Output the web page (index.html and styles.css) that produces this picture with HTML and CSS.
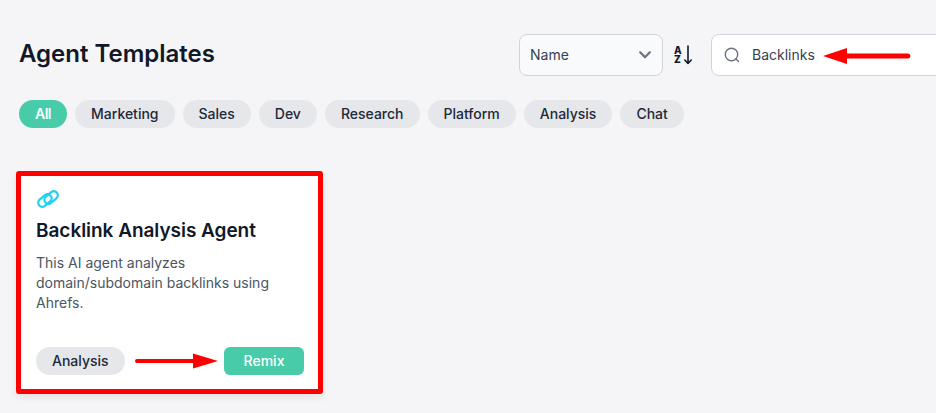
FILE: index.html
```html
<!DOCTYPE html>
<html lang="en">
<head>
<meta charset="utf-8">
<title>Agent Templates</title>
<link rel="stylesheet" href="styles.css">
</head>
<body>
<main class="page">
  <header class="header">
    <h1 class="title">Agent Templates</h1>
    <div class="controls">
      <div class="select">
        <span>Name</span>
        <svg class="chevron" width="12" height="8" viewBox="0 0 12 8"><path d="M1.200 1.300 6 6.300l4.800-5" fill="none" stroke="#6b7280" stroke-width="2.200" stroke-linecap="round" stroke-linejoin="round"/></svg>
      </div>
      <div class="sort">
        <span class="sort-letters">A<br>Z</span>
        <svg width="8" height="20" viewBox="0 0 8 20"><path d="M4 1v17.500M.8 15 4 18.500 7.200 15" fill="none" stroke="#111827" stroke-width="1.600" stroke-linecap="round" stroke-linejoin="round"/></svg>
      </div>
      <div class="search">
        <svg width="16" height="16" viewBox="0 0 16 16"><circle cx="7.500" cy="7.500" r="6.200" fill="none" stroke="#6b7280" stroke-width="1.400"/><path d="m11.800 11.800 2.700 2.700" stroke="#6b7280" stroke-width="1.400" stroke-linecap="round"/></svg>
        <span>Backlinks</span>
      </div>
    </div>
  </header>

  <nav class="filters">
    <span class="pill pill-active">All</span>
    <span class="pill">Marketing</span>
    <span class="pill">Sales</span>
    <span class="pill">Dev</span>
    <span class="pill">Research</span>
    <span class="pill">Platform</span>
    <span class="pill">Analysis</span>
    <span class="pill">Chat</span>
  </nav>

  <article class="card">
    <svg class="card-icon" width="24" height="20" viewBox="0 0 24 20"><g fill="none" stroke="#22d3ee" stroke-width="2.300"><rect x="1.400" y="6.500" width="15" height="8" rx="4" transform="rotate(-40 8.900 10.500)"/><rect x="7.600" y="3.500" width="15" height="8" rx="4" transform="rotate(-40 15.100 7.500)"/></g></svg>
    <h2 class="card-title">Backlink Analysis Agent</h2>
    <p class="card-text">This AI agent analyzes domain/subdomain backlinks using Ahrefs.</p>
    <div class="card-footer">
      <span class="pill">Analysis</span>
      <button class="remix" type="button">Remix</button>
    </div>
  </article>
</main>

<svg class="arrow arrow-search" width="90" height="18" viewBox="0 0 90 18"><path d="M1 9 25 1v5.500h61a2.500 2.500 0 0 1 0 5H25V17z" fill="#f00"/></svg>
<svg class="arrow arrow-remix" width="85" height="16" viewBox="0 0 85 16"><path d="M84 8 59 .5V6H3a2 2 0 0 0 0 4h56v5.500z" fill="#f00"/></svg>
</body>
</html>
```

FILE: styles.css
```css
* {
  box-sizing: border-box;
}

html,
body {
  margin: 0;
  height: 413px;
  overflow: hidden;
  background: #f5f5f8;
}

body {
  position: relative;
  font-family: Inter, "Liberation Sans", sans-serif;
  color: #1f2937;
}

.page {
  width: 1100px;
  padding: 34px 0 0 19px;
}

.header {
  display: flex;
  align-items: center;
  height: 42px;
}

.title {
  width: 500px;
  margin: 0 0 3px;
  font-size: 24px;
  line-height: 36px;
  font-weight: 600;
  color: #111827;
}

.controls {
  display: flex;
  align-items: center;
}

.select {
  display: flex;
  align-items: center;
  justify-content: space-between;
  width: 144px;
  height: 42px;
  padding: 0 11px 1px 10px;
  border: 1px solid #d1d5db;
  border-radius: 8px;
  background: #f9fafb;
  font-size: 14px;
  color: #374151;
}

.sort {
  display: flex;
  align-items: center;
  gap: 2px;
  width: 48px;
  padding-left: 11px;
}

.sort-letters {
  font-size: 10px;
  line-height: 9.500px;
  font-weight: 800;
  color: #111827;
}

.search {
  display: flex;
  align-items: center;
  gap: 12px;
  width: 320px;
  height: 42px;
  padding: 0 0 1px 12px;
  border: 1px solid #d1d5db;
  border-radius: 8px;
  background: #fff;
  font-size: 14px;
  color: #374151;
}

.filters {
  display: flex;
  gap: 8px;
  margin-top: 24px;
}

.pill {
  display: inline-flex;
  align-items: center;
  height: 28px;
  padding: 0 16px 1px;
  border-radius: 14px;
  background: #e5e7eb;
  font-size: 14px;
  font-weight: 500;
  color: #1f2937;
}

.pill-active {
  background: #48cba9;
  font-weight: 600;
  letter-spacing: -0.5px;
  color: #fff;
}

.card {
  display: flex;
  flex-direction: column;
  width: 307px;
  height: 223px;
  margin: 43px 0 0 -3px;
  padding: 14px 14px 14px 15px;
  border: 5px solid #f00;
  border-radius: 3px;
  background: #fff;
  box-shadow: 0 4px 8px rgba(0, 0, 0, 0.07);
}

.card-icon {
  display: block;
  flex: none;
}

.card-title {
  margin: 7px 0 0;
  font-size: 19px;
  line-height: 28px;
  font-weight: 600;
  letter-spacing: -0.04px;
  color: #111827;
}

.card-text {
  margin: 8px 0 0;
  font-size: 14px;
  line-height: 20px;
  color: #4b5563;
}

.card-footer {
  display: flex;
  align-items: center;
  justify-content: space-between;
  margin-top: auto;
}

.remix {
  width: 80px;
  height: 28px;
  padding: 0 0 1px;
  border: 0;
  border-radius: 6px;
  background: #48cba9;
  font-family: inherit;
  font-size: 14px;
  font-weight: 500;
  color: #fff;
}

.arrow {
  position: absolute;
}

.arrow-search {
  left: 822px;
  top: 47px;
}

.arrow-remix {
  left: 134px;
  top: 353px;
}
```
